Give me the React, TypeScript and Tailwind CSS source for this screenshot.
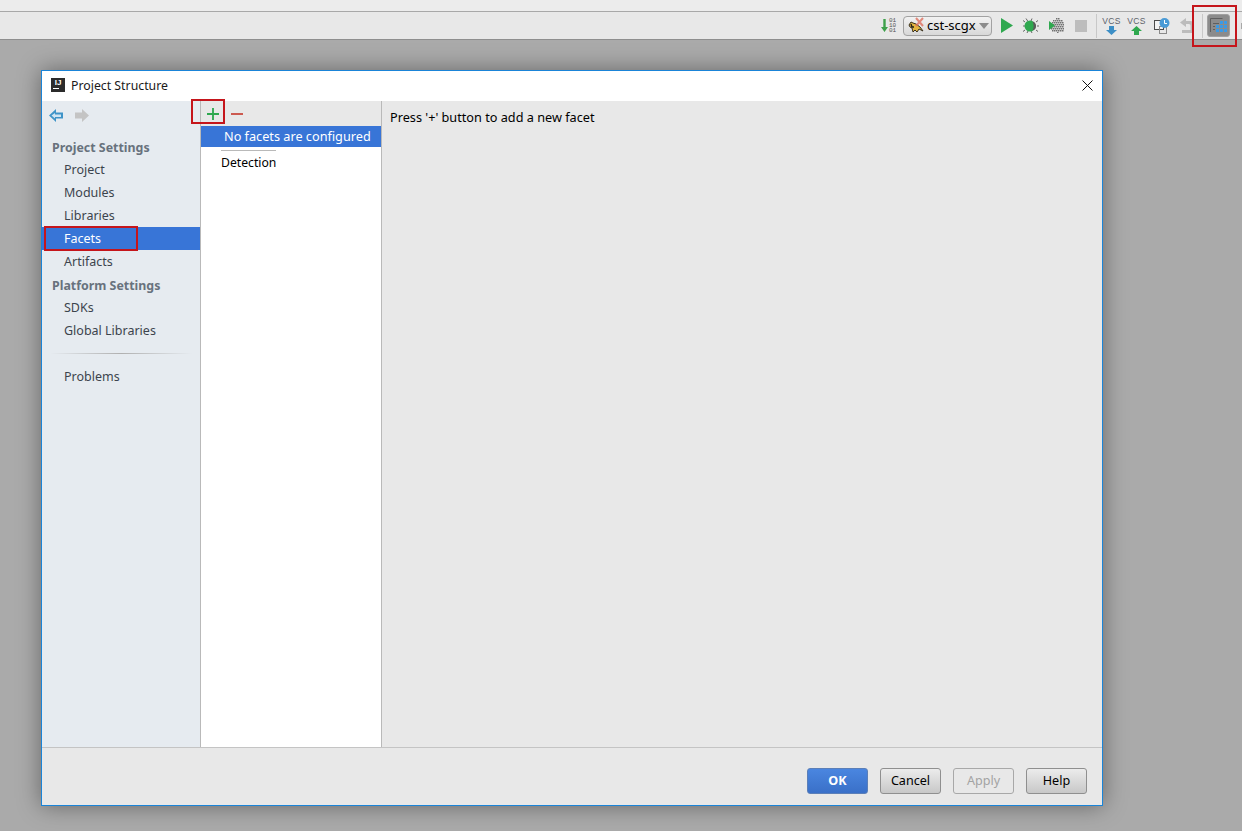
const FONT = "font-['Noto_Sans','Open_Sans',sans-serif]"

function RedBox({ className }: { className: string }) {
  return <div className={`absolute border-2 border-[#c5151b] pointer-events-none ${className}`} />
}

function SortIcon() {
  return (
    <div className="flex items-center w-[16px] h-[16px] gap-px">
      <svg width="7" height="13" viewBox="0 0 7 13">
        <path d="M2.300 0h2.400v8H7l-3.500 5L0 8h2.300z" fill="#3fa14a" />
      </svg>
      <div className="text-[6px] leading-[5px] text-[#555] font-['Liberation_Mono',monospace]">
        <div>01</div>
        <div>10</div>
        <div>01</div>
      </div>
    </div>
  )
}

function TomcatIcon() {
  return (
    <svg width="18" height="18" viewBox="0 0 18 18">
      <path d="M1 8l2-3 2 1 3 1 4 3 3 4-4-2-2 3-2-2-2 2-1-4-2-1z" fill="#e3b53f" stroke="#3a3220" strokeWidth="1" />
      <path d="M3 7l1 3 2 0" fill="none" stroke="#22201a" strokeWidth="1.400" />
      <path d="M8 1l7 8M15 1L8 9" stroke="#e0705f" strokeWidth="2" opacity="0.8" />
    </svg>
  )
}

function RunConfig() {
  return (
    <div className="flex items-center w-[89px] h-[20px] ml-[6px] pl-[4px] rounded-[4px] border border-[#a2a2a2] bg-gradient-to-b from-[#f2f2f2] to-[#d8d8d8]">
      <TomcatIcon />
      <span className="ml-px text-[13px] leading-none text-black">cst-scgx</span>
      <svg className="ml-[3px]" width="10" height="6" viewBox="0 0 10 6">
        <path d="M0 0h10L5 6z" fill="#8c8c8c" />
      </svg>
    </div>
  )
}

function RunIcon() {
  return (
    <svg width="12" height="15" viewBox="0 0 12 15">
      <path d="M0 0l12 7.500L0 15z" fill="#2fa84f" />
    </svg>
  )
}

function BugIcon() {
  return (
    <svg width="16" height="16" viewBox="0 0 16 16">
      <path d="M3 0.500l2 3M9 0.500L8 3M2 4L0 2.500M2 8H0M2 12l-2 1.500M4 15l1-2M9 15l-1-2M13 4l2-1.500M14 8h2M13 12l2 1.500" stroke="#666" strokeWidth="1" fill="none" />
      <circle cx="7" cy="8" r="5.500" fill="#2fa84f" />
      <path d="M9.500 3.500c3 1 3.500 2.500 3.500 4.500s-.5 3.500-3.500 4.500c1.500-3 1.500-6 0-9z" fill="#5b5b5b" />
    </svg>
  )
}

function CoverageIcon() {
  const dots: number[][] = []
  for (let y = 0; y < 15; y += 2) {
    for (let x = 2 + (y % 4 === 0 ? 1 : 0); x < 15; x += 2) {
      if ((x - 8) * (x - 8) + (y - 7) * (y - 7) < 52) dots.push([x, y])
    }
  }
  return (
    <svg width="15" height="15" viewBox="0 0 15 15">
      {dots.map(([x, y]) => (
        <rect key={`${x}-${y}`} x={x} y={y} width="1.500" height="1.500" fill="#717171" />
      ))}
      <path d="M0 3l6 4.500L0 12z" fill="#2fa84f" />
    </svg>
  )
}

function VcsIcon({ up }: { up?: boolean }) {
  return (
    <div className="flex flex-col items-center w-[15px]">
      <span className="text-[8.500px] leading-[9px] tracking-[0.4px] font-medium text-[#5d6268] font-['Liberation_Sans',sans-serif]">VCS</span>
      {up ? (
        <svg width="11" height="9" viewBox="0 0 11 9">
          <path d="M5.500 0L11 5H8v4H3V5H0z" fill="#2fa84f" />
        </svg>
      ) : (
        <svg width="11" height="9" viewBox="0 0 11 9">
          <path d="M3 0h5v4h3L5.500 9 0 4h3z" fill="#3d8fc6" />
        </svg>
      )}
    </div>
  )
}

function HistoryIcon() {
  return (
    <svg width="16" height="16" viewBox="0 0 16 16">
      <rect x="0.500" y="2.500" width="9" height="9" fill="#f2f2f2" stroke="#4b4b4b" />
      <rect x="5.500" y="8.500" width="7" height="7" fill="none" stroke="#8a8a8a" />
      <circle cx="10.500" cy="5" r="5" fill="#4a9bd6" />
      <path d="M10.500 2v3.500H13" fill="none" stroke="#fff" strokeWidth="1" />
    </svg>
  )
}

function RevertIcon() {
  return (
    <svg width="14" height="15" viewBox="0 0 14 15">
      <path d="M6 0v3h4a4 4 0 0 1 4 4v6a2 2 0 0 1-2 2H2v-3h8.500V7.500a1.500 1.500 0 0 0-1.500-1.500H6v3L0 4.500z" fill="#bcbcbc" />
    </svg>
  )
}

function StructureIcon() {
  const cells = [
    [10, 3], [14, 3], [6, 7], [10, 7], [14, 7], [6, 11], [10, 11], [14, 11],
  ]
  return (
    <svg width="18" height="15" viewBox="0 0 18 15">
      <path d="M0.500 14V0.500H12.500M3 5.500h6M3 8.500h2M3 11.500h2" fill="none" stroke="#5f5f5f" />
      {cells.map(([x, y]) => (
        <rect key={`${x}-${y}`} x={x} y={y} width="3" height="3" fill="#3a9ae6" />
      ))}
    </svg>
  )
}

function ToolbarSep({ className }: { className: string }) {
  return <div className={`w-px h-[24px] bg-[#c8c8c8] ${className}`} />
}

function Toolbar() {
  return (
    <div className="flex flex-col shrink-0">
      <div className="h-[11px] bg-[#ececec] border-b border-[#a8a8a8] box-content" />
      <div className="h-[27px] flex items-center justify-end bg-[#e8e8e8] border-b border-[#8e8e8e] box-content">
        <SortIcon />
        <RunConfig />
        <div className="ml-[9px]"><RunIcon /></div>
        <div className="ml-[10px]"><BugIcon /></div>
        <div className="ml-[10px]"><CoverageIcon /></div>
        <div className="ml-[11px] w-[12px] h-[12px] bg-[#bdbdbd]" />
        <ToolbarSep className="ml-[9px]" />
        <div className="ml-[7px]"><VcsIcon /></div>
        <div className="ml-[10px]"><VcsIcon up /></div>
        <div className="ml-[10px]"><HistoryIcon /></div>
        <div className="ml-[10px]"><RevertIcon /></div>
        <ToolbarSep className="ml-[8px]" />
        <div className="ml-[4px] w-[23px] h-[23px] flex items-center justify-center rounded-[3px] bg-[#8b8b8b] border border-[#a0a0a0]">
          <StructureIcon />
        </div>
        <div className="ml-[11px] w-px h-[6px] bg-[#a8a8a8]" />
      </div>
    </div>
  )
}

function IdeaLogo() {
  return (
    <div className="w-[14px] h-[14px] mb-[2px] bg-[#2b2b2b] flex flex-col items-center text-white text-[8px] leading-[9px] font-bold font-['Liberation_Sans',sans-serif]">
      <span>IJ</span>
      <div className="w-[6px] h-px bg-white mt-px self-start ml-[2px]" />
    </div>
  )
}

function SideHeading({ label }: { label: string }) {
  return <div className="h-[23px] pl-[10px] pt-[4px] flex items-center text-[12.400px] font-bold text-[#68727d]">{label}</div>
}

function SideItem({ label, selected }: { label: string; selected?: boolean }) {
  return (
    <div className={`h-[23px] pl-[22px] pt-[2px] flex items-center text-[12.500px] ${selected ? 'bg-[#3875d7] text-white' : 'text-[#3c444d]'}`}>
      {label}
    </div>
  )
}

function Sidebar() {
  return (
    <div className="w-[158px] shrink-0 bg-[#e6ebf0] flex flex-col">
      <div className="h-[34px] flex items-start pt-[8px] pl-[7px] gap-[12px]">
        <svg width="14" height="13" viewBox="0 0 14 13">
          <path d="M7 0v3.500h7v6H7V13L0 6.500z" fill="#3f94c8" />
          <path d="M6 4v1.500h6V8H6v1.500L2.500 6.500z" fill="#cfe4f2" />
        </svg>
        <svg width="14" height="13" viewBox="0 0 14 13">
          <path d="M7 0v3.500H0v6h7V13l7-6.500z" fill="#c4c4c4" />
        </svg>
      </div>
      <SideHeading label="Project Settings" />
      <SideItem label="Project" />
      <SideItem label="Modules" />
      <SideItem label="Libraries" />
      <SideItem label="Facets" selected />
      <SideItem label="Artifacts" />
      <SideHeading label="Platform Settings" />
      <SideItem label="SDKs" />
      <SideItem label="Global Libraries" />
      <div className="h-px mx-[8px] mt-[11px] mb-[11px] bg-gradient-to-r from-transparent via-[#b0b0b0] to-transparent" />
      <SideItem label="Problems" />
    </div>
  )
}

function FacetList() {
  return (
    <div className="w-[182px] shrink-0 flex flex-col bg-white border-x border-[#b9b9b9]">
      <div className="h-[25px] flex items-center pl-[6px] gap-[12px] bg-[#e8e8e8]">
        <svg width="12" height="12" viewBox="0 0 13 13">
          <path d="M5.500 0h2v5.500H13v2H7.500V13h-2V7.500H0v-2h5.500z" fill="#2fa84f" />
        </svg>
        <div className="w-[12px] h-[2px] bg-[#cc5a50]" />
      </div>
      <div className="h-[21px] pl-[23px] flex items-center bg-[#3875d7] text-[12.700px] text-white">
        No facets are configured
      </div>
      <div className="w-[55px] h-px ml-[20px] mt-[3px] bg-[#b9b9b9]" />
      <div className="pl-[20px] mt-[2px] h-[20px] flex items-center text-[12.200px] text-black">Detection</div>
    </div>
  )
}

function FooterButton({ label, variant }: { label: string; variant?: 'primary' | 'disabled' }) {
  const style =
    variant === 'primary'
      ? 'font-bold text-white border-[#5b7fb8] bg-gradient-to-b from-[#4a86e0] to-[#3a70c8]'
      : variant === 'disabled'
        ? 'text-[#a3a3a3] border-[#a8a8a8] bg-[#e8e8e8]'
        : 'text-black border-[#8f8f8f] bg-gradient-to-b from-[#ececec] to-[#c8c8c8]'
  return (
    <div className={`w-[61px] h-[26px] flex items-center justify-center rounded-[3px] border text-[12.600px] ${style}`}>
      {label}
    </div>
  )
}

function Dialog() {
  return (
    <div className={`w-[1062px] h-[736px] flex flex-col bg-[#e8e8e8] border border-[#1a84d8] shadow-[0_0_22px_rgba(0,0,0,0.4)] ${FONT}`}>
      <div className="h-[30px] shrink-0 flex items-center pl-[9px] pr-[9px] bg-white">
        <IdeaLogo />
        <span className="ml-[6px] text-[12.300px] text-[#1a1a1a]">Project Structure</span>
        <svg className="ml-auto mb-[2px]" width="11" height="11" viewBox="0 0 11 11">
          <path d="M0.500 0.500l10 10M10.500 0.500l-10 10" stroke="#111" strokeWidth="1" />
        </svg>
      </div>
      <div className="flex flex-1 min-h-0">
        <Sidebar />
        <FacetList />
        <div className="flex-1 pl-[8px] pt-[6px] text-[12.700px] leading-[20px] text-black">Press '+' button to add a new facet</div>
      </div>
      <div className="h-[58px] shrink-0 flex items-start justify-end gap-[12px] pt-[20px] pr-[15px] border-t border-[#c4c4c4]">
        <FooterButton label="OK" variant="primary" />
        <FooterButton label="Cancel" />
        <FooterButton label="Apply" variant="disabled" />
        <FooterButton label="Help" />
      </div>
    </div>
  )
}

export default function App() {
  return (
    <div className="relative w-[1242px] h-[831px] overflow-hidden flex flex-col bg-[#aaaaaa]">
      <Toolbar />
      <div className="pl-[41px] pt-[30px]">
        <Dialog />
      </div>
      <RedBox className="left-[1192px] top-[5px] w-[45px] h-[42px]" />
      <RedBox className="left-[191px] top-[99px] w-[34px] h-[25px]" />
      <RedBox className="left-[44px] top-[226px] w-[94px] h-[25px]" />
    </div>
  )
}
